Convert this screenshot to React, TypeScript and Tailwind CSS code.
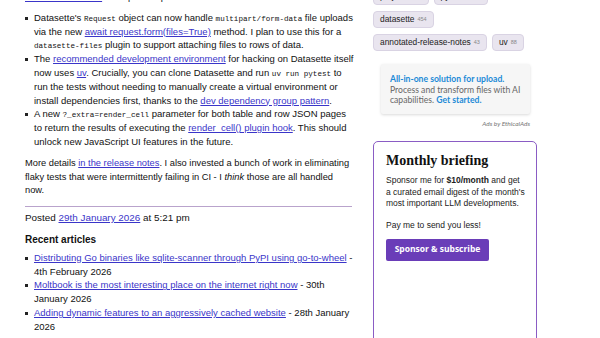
import type { ReactNode } from 'react';

const sans = { fontFamily: '"Liberation Sans", Arial, sans-serif' };

function A({ children }: { children: ReactNode }) {
  return <a className="text-[#3a35c9] underline underline-offset-[1px]">{children}</a>;
}

function Code({ children }: { children: ReactNode }) {
  return <code className="font-['Liberation_Mono',monospace] text-[7.6px] leading-none">{children}</code>;
}

function Item({ children }: { children: ReactNode }) {
  return (
    <li className="flex">
      <span className="mt-[6px] mr-[6px] h-[3px] w-[3px] shrink-0 bg-[#222]" />
      <span>{children}</span>
    </li>
  );
}

function Tag({ name, count }: { name: string; count: number }) {
  return (
    <span className="inline-flex h-[17px] items-center rounded-[4px] border border-[#d9d3e3] bg-[#e9e5ef] px-[6px] text-[8.4px] text-[#222]">
      {name}
      <span className="ml-[3px] text-[5.5px] text-[#888]">{count}</span>
    </span>
  );
}

export default function App() {
  return (
    <div className="flex h-[338px] w-[600px] overflow-hidden bg-white text-[#111]" style={sans}>
      {/* Article column */}
      <div className="ml-[25px] w-[330px] text-[9.5px] leading-[13.8px]">
        <p className="-mt-[10px] mb-[7px]">
          <A>and other features</A> to help with uploads.
        </p>

        <ul className="mb-[8px]">
          <Item>
            Datasette's <Code>Request</Code> object can now handle <Code>multipart/form-data</Code> file uploads
            via the new <A>await request.form(files=True)</A> method. I plan to use this for a{' '}
            <Code>datasette-files</Code> plugin to support attaching files to rows of data.
          </Item>
          <Item>
            The <A>recommended development environment</A> for hacking on Datasette itself now uses <A>uv</A>.
            Crucially, you can clone Datasette and run <Code>uv run pytest</Code> to run the tests without
            needing to manually create a virtual environment or install dependencies first, thanks to the{' '}
            <A>dev dependency group pattern</A>.
          </Item>
          <Item>
            A new <Code>?_extra=render_cell</Code> parameter for both table and row JSON pages to return the
            results of executing the <A>render_cell() plugin hook</A>. This should unlock new JavaScript UI
            features in the future.
          </Item>
        </ul>

        <p className="pr-[2px] text-[9.3px]">
          More details <A>in the release notes</A>. I also invested a bunch of work in eliminating flaky tests
          that were intermittently failing in CI - I <em>think</em> those are all handled now.
        </p>

        <div className="mt-[8px] mr-[3px] h-px bg-[#b9a3cc]" />

        <p className="mt-[4px] text-[9.9px]">
          Posted <A>29th January 2026</A> at 5:21 pm
        </p>

        <h3 className="mt-[8px] text-[10px] font-bold">Recent articles</h3>

        <ul className="mt-[4px]">
          <Item>
            <A>Distributing Go binaries like sqlite-scanner through PyPI using go-to-wheel</A> - 4th February 2026
          </Item>
          <Item>
            <A>Moltbook is the most interesting place on the internet right now</A> - 30th January 2026
          </Item>
          <Item>
            <A>Adding dynamic features to an aggressively cached website</A> - 28th January 2026
          </Item>
        </ul>
      </div>

      {/* Sidebar */}
      <div className="ml-[18px] w-[164px]">
        <div className="-mt-[12px] flex flex-wrap gap-x-[5px] gap-y-[6px]">
          <Tag name="projects" count={555} />
          <Tag name="python" count={1223} />
          <Tag name="datasette" count={454} />
          <Tag name="annotated-release-notes" count={43} />
          <Tag name="uv" count={88} />
        </div>

        <div className="ml-[8px] mt-[13px] w-[149px] rounded-[2px] bg-[#f6f6f6] px-[9px] pt-[10px] pb-[8px] text-[8.6px] leading-[10.7px] text-[#666] shadow-[0_1px_3px_rgba(0,0,0,0.15)] font-['Lato',sans-serif]">
          <p className="font-bold text-[#1c8ad6]">All-in-one solution for upload.</p>
          <p>
            Process and transform files with AI capabilities.{' '}
            <span className="font-bold text-[#1c8ad6]">Get started.</span>
          </p>
        </div>
        <p className="mt-[5px] w-[157px] text-right text-[6.5px] italic text-[#777] font-['Lato',sans-serif]">
          Ads by EthicalAds
        </p>

        <div className="mt-[12px] h-[220px] rounded-[5px] border-[1.5px] border-[#8a5cc4] pl-[12px] pr-[11px] pt-[9px]">
          <h2 className="font-['Liberation_Serif',serif] text-[14px] font-bold leading-[20px] text-[#111]">
            Monthly briefing
          </h2>
          <p className="mt-[4px] text-[8.5px] leading-[11.7px] text-[#222]">
            Sponsor me for <b>$10/month</b> and get a curated email digest of the month's most important LLM
            developments.
          </p>
          <p className="mt-[10px] text-[8.5px] leading-[11.7px] text-[#222]">Pay me to send you less!</p>
          <button className="mt-[7px] h-[22px] w-[103px] rounded-[2px] bg-[#6a3db8] text-[8.5px] font-bold text-white font-['Open_Sans',sans-serif]">
            Sponsor &amp; subscribe
          </button>
        </div>
      </div>
    </div>
  );
}
